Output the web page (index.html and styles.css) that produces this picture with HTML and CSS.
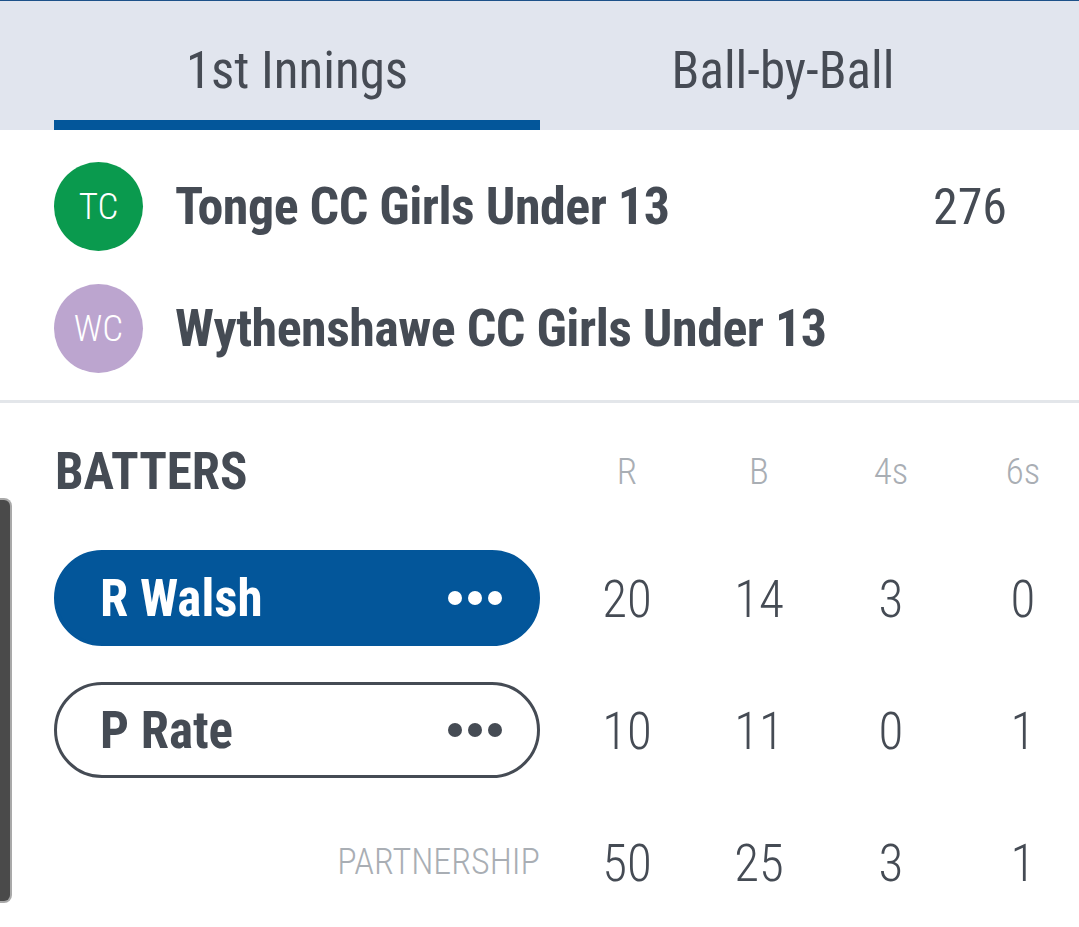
FILE: index.html
```html
<!DOCTYPE html>
<html>
<head>
<meta charset="utf-8">
<link rel="stylesheet" href="styles.css">
</head>
<body>
<div class="app">
  <nav class="tabs">
    <div class="tab tab-active">1st Innings</div>
    <div class="tab">Ball-by-Ball</div>
  </nav>
  <section class="teams">
    <div class="team">
      <div class="avatar avatar-green">TC</div>
      <div class="team-name">Tonge CC Girls Under 13</div>
      <div class="team-score">276</div>
    </div>
    <div class="team">
      <div class="avatar avatar-purple">WC</div>
      <div class="team-name">Wythenshawe CC Girls Under 13</div>
      <div class="team-score"></div>
    </div>
  </section>
  <section class="batters">
    <div class="row row-head">
      <div class="title">BATTERS</div>
      <div class="col-h">R</div>
      <div class="col-h">B</div>
      <div class="col-h">4s</div>
      <div class="col-h">6s</div>
    </div>
    <div class="row row-batter">
      <div class="pill pill-on"><span class="pill-name">R Walsh</span><span class="dots"><i></i><i></i><i></i></span></div>
      <div class="num">20</div>
      <div class="num">14</div>
      <div class="num">3</div>
      <div class="num">0</div>
    </div>
    <div class="row row-batter">
      <div class="pill"><span class="pill-name">P Rate</span><span class="dots"><i></i><i></i><i></i></span></div>
      <div class="num">10</div>
      <div class="num">11</div>
      <div class="num">0</div>
      <div class="num">1</div>
    </div>
    <div class="row row-batter">
      <div class="part-label">PARTNERSHIP</div>
      <div class="num">50</div>
      <div class="num">25</div>
      <div class="num">3</div>
      <div class="num">1</div>
    </div>
  </section>
  <div class="handle"></div>
</div>
</body>
</html>
```
FILE: styles.css
```css
* { box-sizing: border-box; margin: 0; padding: 0; }
html, body { width: 1079px; height: 927px; overflow: hidden; background: #fff; }
body {
  font-family: Roboto, "Liberation Sans", sans-serif;
  font-stretch: 75%;
  color: #454b54;
}
.app { position: relative; height: 927px; }

.tabs {
  display: flex;
  height: 130px;
  background: #e1e5ee;
  border-top: 1px solid #1d5189;
  padding: 0 53px 0 54px;
}
.tab {
  flex: 1;
  display: flex;
  align-items: center;
  justify-content: center;
  padding-top: 20px;
  font-size: 51px;
  font-weight: 400;
  color: #464b54;
  border-bottom: 10px solid transparent;
}
.tab-active { border-bottom-color: #03569a; }

.teams {
  padding: 32px 0 27px 54px;
  border-bottom: 3px solid #e3e6ea;
  display: flex;
  flex-direction: column;
  gap: 33px;
}
.team {
  display: flex;
  align-items: center;
  height: 89px;
}
.avatar {
  width: 89px;
  height: 89px;
  border-radius: 50%;
  color: #fff;
  font-size: 37px;
  font-weight: 300;
  display: flex;
  align-items: center;
  justify-content: center;
  flex-shrink: 0;
}
.avatar-green { background: #0a9a4e; }
.avatar-purple { background: #bca5cf; }
.team-name {
  margin-left: 32px;
  font-size: 52px;
  font-weight: 700;
  letter-spacing: -0.5px;
  flex: 1;
}
.team-score {
  width: 146px;
  font-size: 50px;
  font-weight: 400;
}

.batters { padding: 22px 0 0 54px; }
.row {
  display: grid;
  grid-template-columns: 486px repeat(4, 90px);
  column-gap: 42px;
  align-items: center;
}
.row-head { height: 92px; margin-bottom: 33px; }
.row-batter { height: 96px; margin-bottom: 36px; }
.title { font-size: 51px; font-weight: 700; padding-left: 1px; }
.col-h {
  text-align: center;
  font-size: 37px;
  font-weight: 300;
  color: #a9aeb4;
}
.num {
  text-align: center;
  font-size: 51px;
  font-weight: 300;
  color: #454b54;
  padding-top: 3px;
}
.pill {
  height: 96px;
  border-radius: 48px;
  border: 3px solid #454b54;
  display: flex;
  align-items: center;
  justify-content: space-between;
  padding: 0 35px 0 43px;
}
.pill-on { background: #03569a; border-color: #03569a; color: #fff; }
.pill-name { font-size: 51px; font-weight: 700; }
.dots { display: flex; gap: 6px; }
.dots i {
  display: block;
  width: 14px;
  height: 14px;
  border-radius: 50%;
  background: currentColor;
}
.part-label {
  text-align: right;
  font-size: 36px;
  font-weight: 300;
  color: #a9aeb4;
}

.handle {
  position: absolute;
  left: 0;
  top: 498px;
  width: 12px;
  height: 405px;
  background: #4a4a4a;
  border: 2px solid #a9a9a9;
  border-left: none;
  border-radius: 0 8px 8px 0;
}
```
